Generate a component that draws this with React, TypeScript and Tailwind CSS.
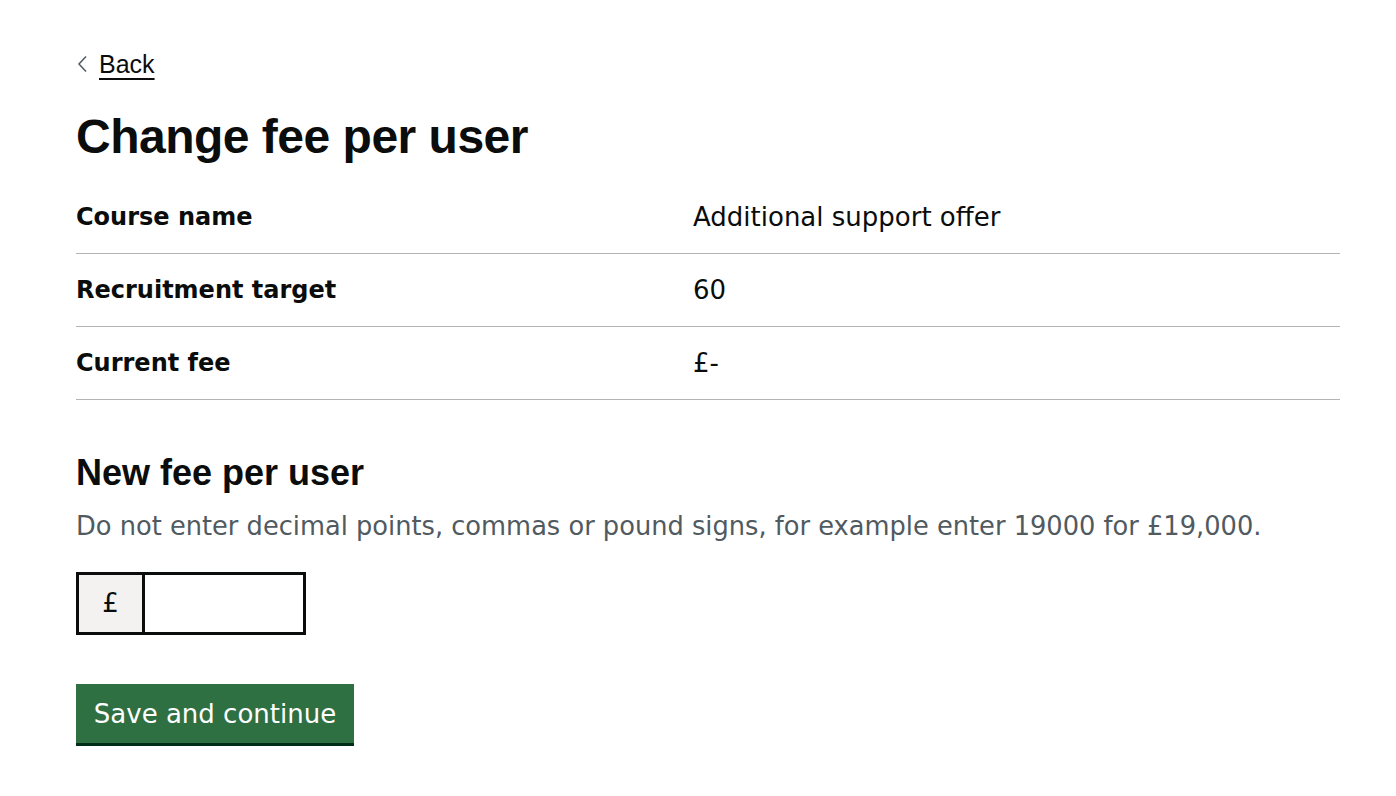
import React from "react";

// Summary rows shown at the top of the page
const summaryRows = [
  { key: "Course name", value: "Additional support offer" },
  { key: "Recruitment target", value: "60" },
  { key: "Current fee", value: "£-" },
];

const App: React.FC = () => {
  return (
    <main
      className="min-h-screen bg-white text-[#0b0c0c] px-[76px] pt-[46px]"
      style={{ fontFamily: '"Liberation Sans", Arial, sans-serif' }}
    >
      {/* Back link */}
      <a href="#" className="inline-flex items-center gap-[11px] text-[#0b0c0c] text-[25px] leading-[36px]">
        <svg width="12" height="18" viewBox="0 0 12 18" className="text-[#505a5f]">
          <path d="M10 1.5 L3 9 L10 16.5" fill="none" stroke="currentColor" strokeWidth="1.5" />
        </svg>
        <span className="underline underline-offset-[5px] decoration-[2px]">Back</span>
      </a>

      {/* Page title */}
      <h1 className="mt-[27px] text-[48px] leading-[56px] font-bold tracking-[-0.5px]">Change fee per user</h1>

      {/* Summary list */}
      <dl className="mt-[34px] w-[1264px] font-['DejaVu_Sans',sans-serif]">
        {summaryRows.map((row, i) => (
          <div
            key={row.key}
            className={`grid grid-cols-[617px_1fr] border-b border-[#b1b4b6] ${i === 0 ? "pt-[0px] pb-[18px]" : "py-[18px]"}`}
          >
            <dt className="text-[24px] leading-[36px] font-bold">{row.key}</dt>
            <dd className="text-[26px] leading-[36px]">{row.value}</dd>
          </div>
        ))}
      </dl>

      {/* New fee form */}
      <form className="mt-[50px]">
        <label htmlFor="fee" className="block text-[36px] leading-[46px] font-bold">
          New fee per user
        </label>
        <p className="mt-[12px] text-[25.7px] leading-[36px] text-[#505a5f] font-['DejaVu_Sans',sans-serif]">
          Do not enter decimal points, commas or pound signs, for example enter 19000 for £19,000.
        </p>

        <div className="mt-[28px] flex h-[63px] w-[230px]">
          <div className="flex w-[66px] items-center justify-center border-[3px] border-r-0 border-[#0b0c0c] bg-[#f3f2f1] text-[26px] font-['DejaVu_Sans',sans-serif]">
            £
          </div>
          <input
            id="fee"
            type="text"
            className="w-[164px] border-[3px] border-[#0b0c0c] px-2 text-[25px] outline-none"
          />
        </div>

        <button
          type="button"
          className="mt-[49px] block h-[59px] w-[278px] bg-[#2f7043] text-white text-[26px] leading-[36px] shadow-[0_3px_0_#002d18] font-['DejaVu_Sans',sans-serif]"
        >
          Save and continue
        </button>
      </form>
    </main>
  );
};

export default App;
